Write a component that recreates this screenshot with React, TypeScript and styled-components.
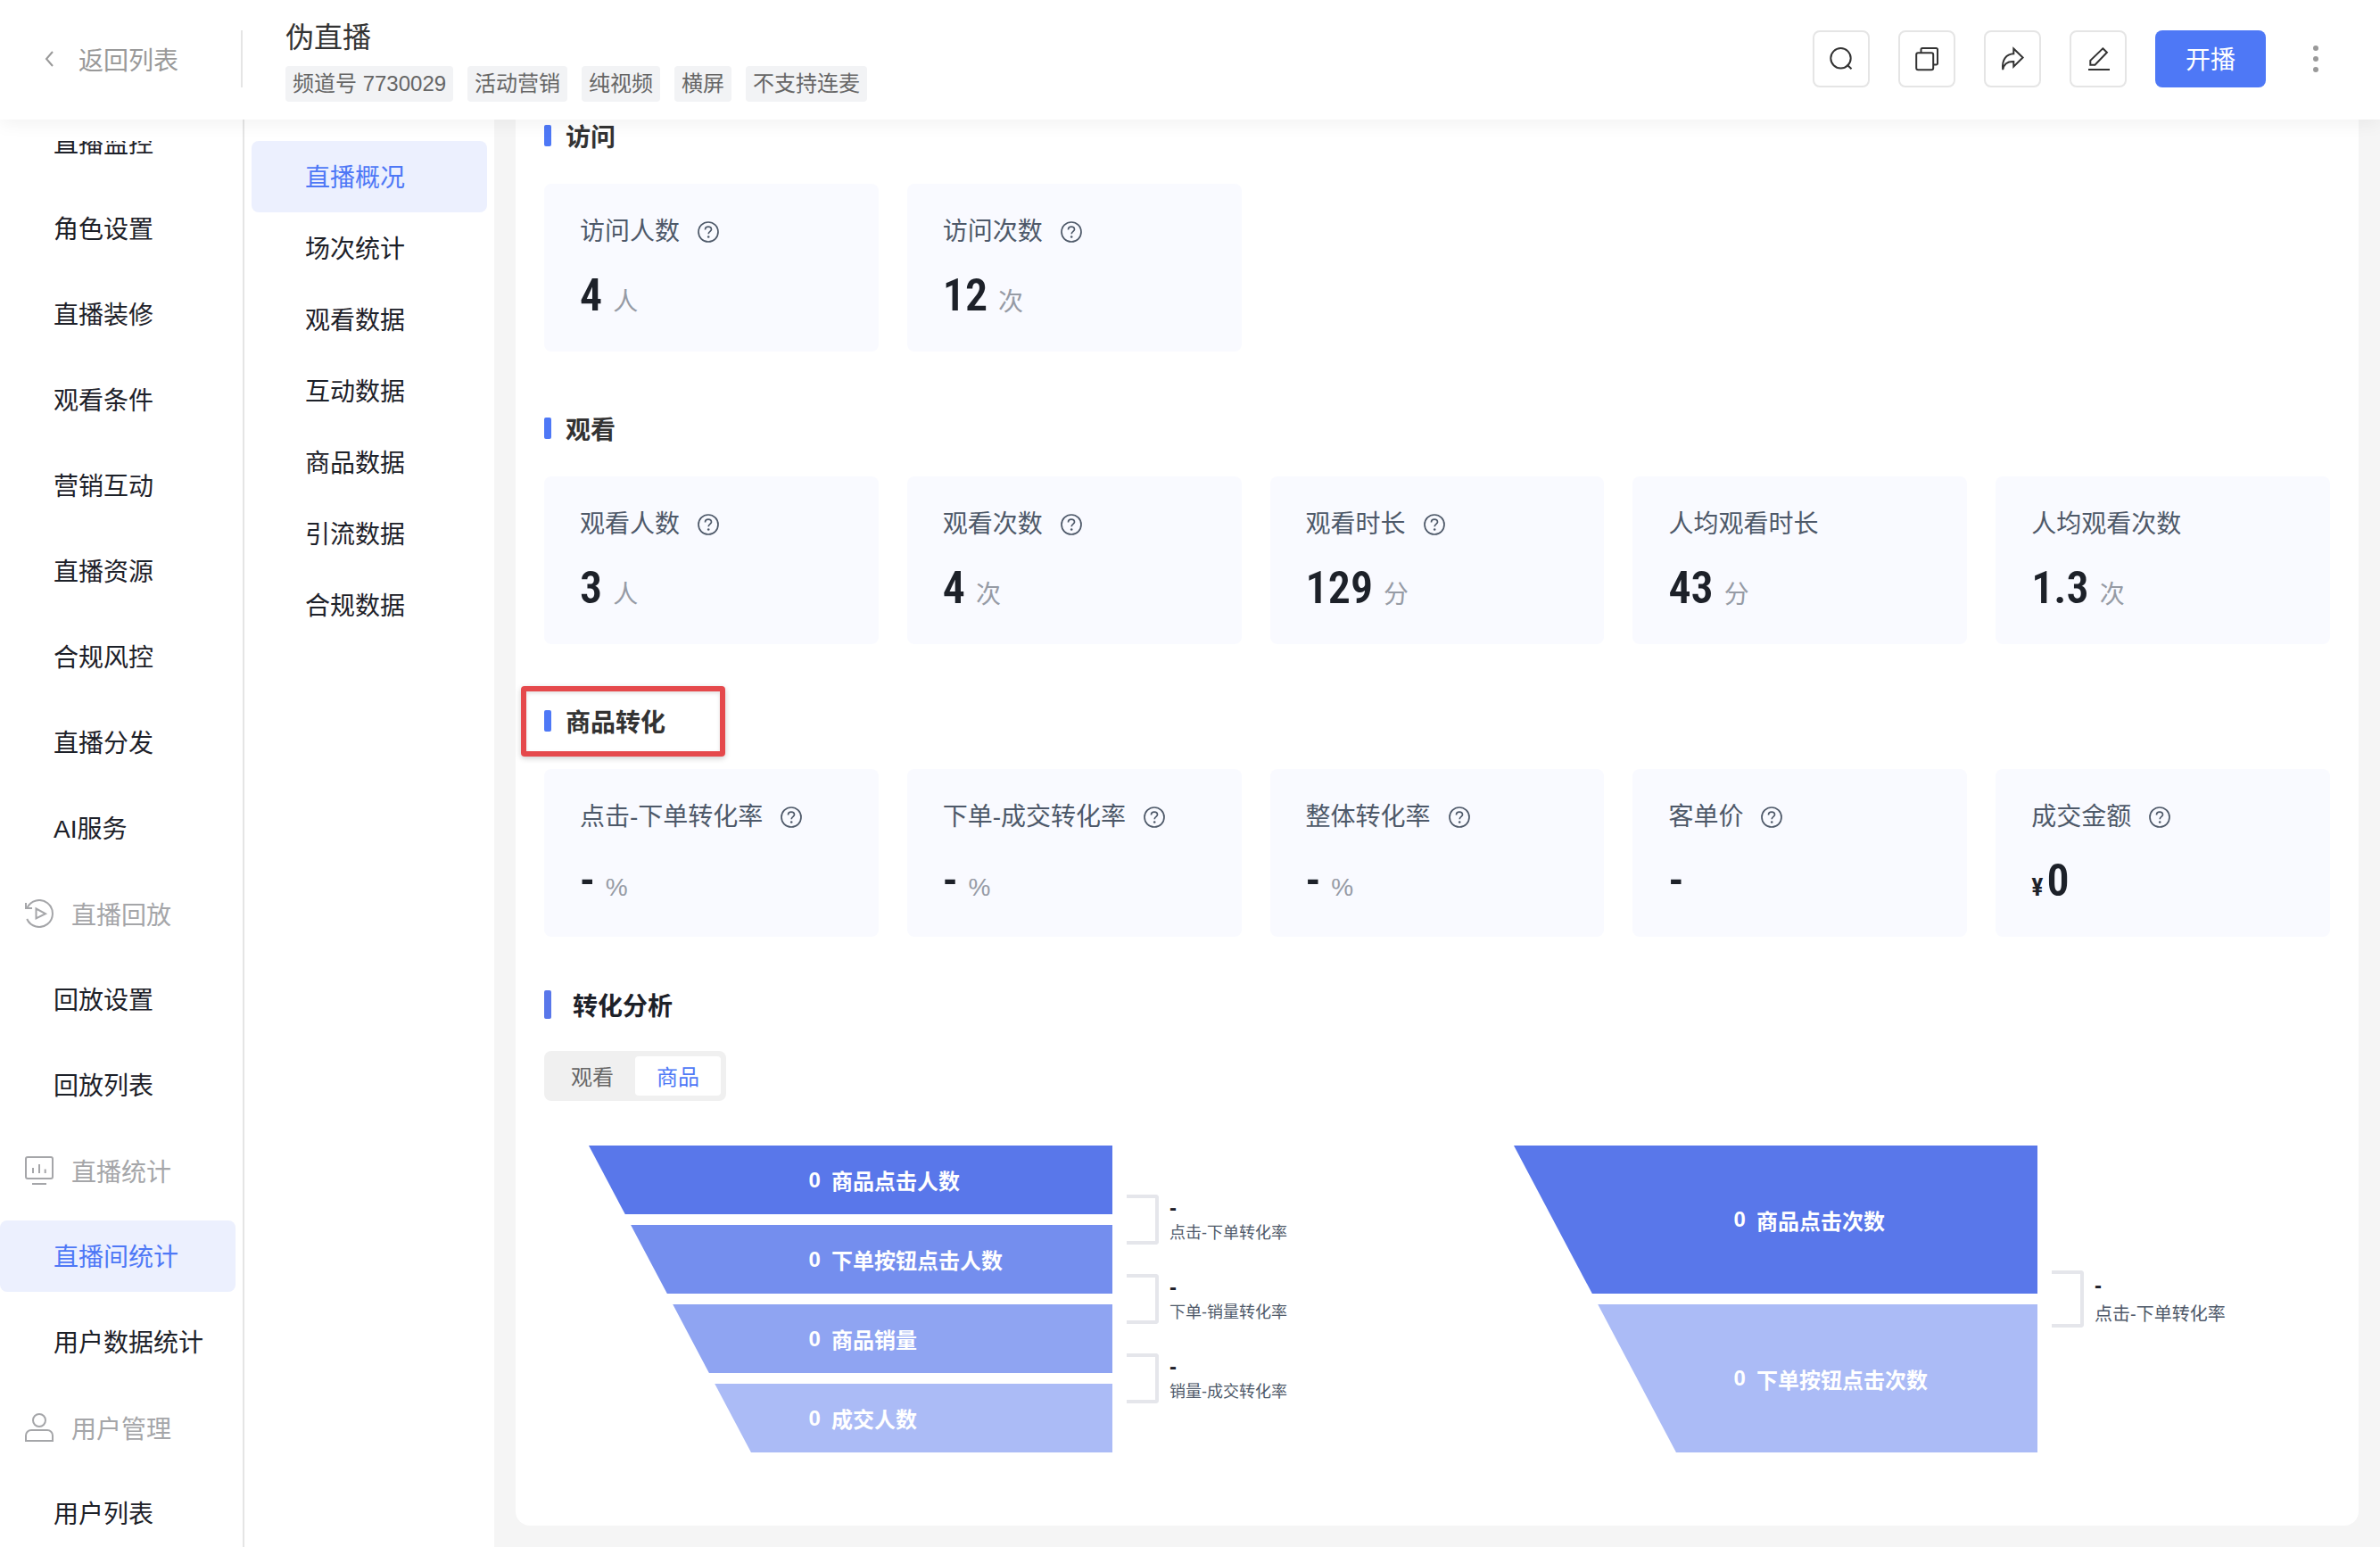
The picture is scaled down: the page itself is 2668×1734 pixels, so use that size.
import React, { useState } from "react";
import styled, { createGlobalStyle } from "styled-components";

const color = {
  primary: "#4e78f6",
  primarySoft: "#ecf0fe",
  ink: "#1d2129",
  title: "#333333",
  label: "#4e5969",
  unit: "#969ba5",
  muted: "#a5a6a9",
  line: "#e5e5e5",
  page: "#f5f5f5",
  card: "#f9faff",
};

const GlobalStyle = createGlobalStyle`
  *, *::before, *::after { box-sizing: border-box; }
  body {
    margin: 0;
    color: ${color.ink};
    background: ${color.page};
    font-family: "Liberation Sans", "Noto Sans CJK SC", sans-serif;
  }
  button { font-family: inherit; cursor: pointer; }
  a { color: inherit; text-decoration: none; }
  h1, h2, ul, dl, dd { margin: 0; padding: 0; }
  ul { list-style: none; }
`;

const Shell = styled.div`
  display: flex;
  flex-direction: column;
  height: 100vh;
  overflow: hidden;
`;

/* ---------- header ---------- */

const Header = styled.header`
  display: flex;
  align-items: center;
  flex: none;
  height: 134px;
  padding: 0 56px 2px 0;
  background: #fff;
  box-shadow: 0 4px 20px rgba(0, 0, 0, 0.06);
  z-index: 2;
`;

const BackLink = styled.a`
  display: flex;
  align-items: center;
  gap: 22px;
  width: 272px;
  height: 64px;
  padding-left: 44px;
  border-right: 2px solid ${color.line};
  color: #999;
  font-size: 28px;
`;

const ChannelInfo = styled.div`
  flex: 1;
  padding-left: 48px;
`;

const ChannelTitle = styled.h1`
  color: ${color.title};
  font-size: 32px;
  font-weight: 400;
  line-height: 48px;
`;

const TagRow = styled.ul`
  display: flex;
  gap: 16px;
  margin-top: 8px;
`;

const Tag = styled.li`
  padding: 0 8px;
  border-radius: 4px;
  background: #f2f3f5;
  color: #666;
  font-size: 24px;
  line-height: 40px;
`;

const Toolbar = styled.div`
  display: flex;
  align-items: center;
  gap: 32px;
`;

const ToolButton = styled.button`
  display: grid;
  place-items: center;
  width: 64px;
  height: 64px;
  padding: 0;
  border: 2px solid ${color.line};
  border-radius: 8px;
  background: #fff;
  color: ${color.title};
`;

const LiveButton = styled.button`
  width: 124px;
  height: 64px;
  padding: 0 0 2px;
  border: 0;
  border-radius: 8px;
  background: ${color.primary};
  color: #fff;
  font-size: 28px;
`;

const MoreButton = styled.button`
  display: grid;
  place-items: center;
  width: 32px;
  height: 64px;
  margin-left: 8px;
  padding: 0;
  border: 0;
  background: none;
  color: #999;
`;

/* ---------- navigation ---------- */

const Body = styled.div`
  display: flex;
  flex: 1;
  min-height: 0;
`;

const SideNav = styled.nav`
  flex: none;
  width: 274px;
  padding: 24px 8px 0 0;
  border-right: 2px solid ${color.line};
  background: #fff;
`;

const SideScroller = styled.div`
  height: 100%;
  overflow: hidden;
`;

/* The list rests in a scrolled position, its first entry partly out of view. */
const SideList = styled.ul`
  display: flex;
  flex-direction: column;
  gap: 16px;
  margin-top: -38px;
`;

const SideLink = styled.a<{ $active?: boolean }>`
  display: flex;
  align-items: center;
  height: 80px;
  padding: 0 0 2px 60px;
  border-radius: 8px;
  background: ${(p) => (p.$active ? color.primarySoft : "transparent")};
  color: ${(p) => (p.$active ? color.primary : color.ink)};
  font-size: 28px;
`;

const SideGroup = styled.div`
  display: flex;
  align-items: center;
  gap: 20px;
  height: 80px;
  padding-left: 28px;
  color: ${color.muted};
  font-size: 28px;
`;

const SubNav = styled.nav`
  flex: none;
  width: 280px;
  padding: 24px 8px;
  background: #fff;
`;

/* ---------- content ---------- */

const Main = styled.main`
  flex: 1;
  min-width: 0;
  padding: 0 24px 24px;
  overflow: hidden;
`;

const Panel = styled.div`
  height: 100%;
  padding: 6px 32px 0;
  border-radius: 0 0 16px 16px;
  background: #fff;
`;

const Section = styled.section`
  margin-bottom: 74px;
`;

const SectionTitle = styled.h2<{ $marked?: boolean }>`
  position: relative;
  display: flex;
  align-items: center;
  gap: 16px;
  width: fit-content;
  height: 24px;
  color: ${color.title};
  font-size: 28px;
  font-weight: 700;
  white-space: nowrap;

  &::before {
    content: "";
    width: 8px;
    height: 24px;
    border-radius: 2px;
    background: ${color.primary};
  }

  ${(p) =>
    p.$marked &&
    `&::after {
      content: "";
      position: absolute;
      inset: -27px -67px -28px -26px;
      border: 6px solid #e5494c;
      border-radius: 4px;
      box-shadow: 0 2px 6px rgba(0, 0, 0, 0.2), inset 0 2px 4px rgba(0, 0, 0, 0.12);
    }`}
`;

const CardGrid = styled.div`
  display: grid;
  grid-template-columns: repeat(5, 1fr);
  gap: 32px;
  margin-top: 42px;
`;

const Card = styled.dl`
  height: 188px;
  padding: 36px 40px;
  border-radius: 8px;
  background: ${color.card};
`;

const CardLabel = styled.dt`
  display: flex;
  align-items: center;
  gap: 20px;
  color: ${color.label};
  font-size: 28px;
  line-height: 36px;
  white-space: nowrap;
`;

const HelpButton = styled.button`
  display: grid;
  width: 24px;
  height: 24px;
  padding: 0;
  border: 0;
  background: none;
  color: ${color.label};
`;

const CardValue = styled.dd`
  display: flex;
  align-items: baseline;
  gap: 12px;
  margin-top: 25px;
  line-height: 56px;
`;

const Figure = styled.span`
  color: ${color.ink};
  font-family: "Roboto Condensed", Roboto, "Liberation Sans", sans-serif;
  font-size: 50px;
  font-weight: 600;
`;

const Currency = styled.span`
  margin-right: 4px;
  font-size: 28px;
`;

const Unit = styled.span`
  color: ${color.unit};
  font-size: 28px;
`;

const AnalysisTitle = styled.h2`
  display: flex;
  align-items: center;
  gap: 24px;
  height: 32px;
  font-size: 28px;
  font-weight: 700;

  &::before {
    content: "";
    width: 8px;
    height: 32px;
    border-radius: 2px;
    background: #5977ea;
  }
`;

const Analysis = styled.section`
  margin-top: -14px;
`;

const Tabs = styled.div`
  display: flex;
  width: fit-content;
  margin-top: 36px;
  padding: 6px;
  border-radius: 8px;
  background: #f0f0f0;
`;

const Tab = styled.button<{ $active: boolean }>`
  width: 96px;
  height: 44px;
  padding: 0 0 2px;
  border: 0;
  border-radius: 4px;
  background: ${(p) => (p.$active ? "#fff" : "transparent")};
  color: ${(p) => (p.$active ? color.primary : "#666")};
  font-size: 24px;
`;

const Funnels = styled.div`
  display: grid;
  grid-template-columns: 1fr 1fr;
  gap: 72px;
  margin-top: 50px;
`;

const FunnelChart = styled.div`
  display: flex;
  gap: 16px;
  height: 344px;
  padding-left: 50px;
`;

const FunnelShape = styled.ol`
  display: flex;
  flex: 1;
  flex-direction: column;
  gap: 12px;
  margin: 0;
  padding: 0;
  list-style: none;
  clip-path: polygon(0 0, 100% 0, 100% 100%, 31% 100%);
`;

const FunnelStep = styled.li<{ $fill: string }>`
  display: flex;
  flex: 1;
  align-items: center;
  gap: 12px;
  padding-left: 42%;
  background: ${(p) => p.$fill};
  color: #fff;
  font-size: 24px;
  font-weight: 700;
  white-space: nowrap;
`;

const Rates = styled.ul`
  display: flex;
  flex-direction: column;
  justify-content: center;
  gap: 33px;
  width: 312px;
`;

const Rate = styled.li<{ $large: boolean }>`
  display: flex;
  align-items: center;
  gap: 12px;
  height: ${(p) => (p.$large ? 64 : 56)}px;
  color: ${color.label};
  font-size: ${(p) => (p.$large ? 20 : 18)}px;
  line-height: ${(p) => (p.$large ? 32 : 28)}px;

  &::before {
    content: "";
    align-self: stretch;
    width: 36px;
    border: 4px solid #e5e6eb;
    border-left: 0;
    border-radius: 0 4px 4px 0;
  }
`;

const RateText = styled.div`
  padding-top: 2px;
`;

const RateValue = styled.strong`
  display: block;
  color: ${color.ink};
  font-size: 24px;
`;

/* ---------- icons ---------- */

type IconProps = { children: React.ReactNode; size?: number; weight?: number };

const Icon = ({ children, size = 32, weight = 2 }: IconProps) => (
  <svg width={size} height={size} viewBox={`0 0 ${size} ${size}`} fill="none" stroke="currentColor" strokeWidth={weight} aria-hidden="true">
    {children}
  </svg>
);

const SearchIcon = () => (
  <Icon>
    <circle cx="15.5" cy="15.3" r="11.2" />
    <path d="M22.5 22.5l5 4.8" />
  </Icon>
);

const CopyIcon = () => (
  <Icon>
    <rect x="4.2" y="9.2" width="19" height="19" rx="2" />
    <path d="M9.5 9V5.5a1.5 1.5 0 0 1 1.5-1.5H26.5a1.5 1.5 0 0 1 1.5 1.5V21a1.5 1.5 0 0 1-1.5 1.5H23.5" />
  </Icon>
);

const ShareIcon = () => (
  <Icon>
    <path d="M17.3 4.5L27.6 14.5 17.3 24.6V19C11.5 18.8 6.5 20.5 5.2 28 3.8 17 9 10.5 17.3 10.2Z" />
  </Icon>
);

const EditIcon = () => (
  <Icon>
    <path d="M21.3 4.3l4.6 4.5L12.5 22.7H7.3V17.8Z" />
    <path d="M5 28H29" />
  </Icon>
);

const ReplayIcon = () => (
  <Icon>
    <path d="M2.3 9.8A15 15 0 1 1 2.2 22" />
    <path d="M1 4V10H8" />
    <path d="M12.5 10.5L23 16.2 12.5 21.5Z" />
  </Icon>
);

const StatsIcon = () => (
  <Icon>
    <rect x="1" y="1" width="30" height="24" rx="2" />
    <path d="M9 13v6M16 9v10M22.7 14.5v4.5M8 31h16" />
  </Icon>
);

const UserIcon = () => (
  <Icon>
    <circle cx="16" cy="8" r="7" />
    <path d="M1 31V25a6 6 0 0 1 6-6H25a6 6 0 0 1 6 6V31Z" />
  </Icon>
);

const HelpIcon = () => (
  <Icon size={24} weight={1.7}>
    <circle cx="12" cy="12" r="11" />
    <path d="M8.5 9.5C8.5 7.5 10 6.2 12 6.2S15.5 7.5 15.5 9.3C15.5 11.3 12.2 11.6 12.2 14.2" />
    <circle cx="12.2" cy="17.5" r="1.3" fill="currentColor" stroke="none" />
  </Icon>
);

/* ---------- data ---------- */

type NavEntry = { text: string; icon?: React.ReactNode; active?: boolean };

const sideEntries: NavEntry[] = [
  { text: "直播监控" },
  { text: "角色设置" },
  { text: "直播装修" },
  { text: "观看条件" },
  { text: "营销互动" },
  { text: "直播资源" },
  { text: "合规风控" },
  { text: "直播分发" },
  { text: "AI服务" },
  { text: "直播回放", icon: <ReplayIcon /> },
  { text: "回放设置" },
  { text: "回放列表" },
  { text: "直播统计", icon: <StatsIcon /> },
  { text: "直播间统计", active: true },
  { text: "用户数据统计" },
  { text: "用户管理", icon: <UserIcon /> },
  { text: "用户列表" },
];

const subEntries = ["直播概况", "场次统计", "观看数据", "互动数据", "商品数据", "引流数据", "合规数据"];

const tags = ["频道号 7730029", "活动营销", "纯视频", "横屏", "不支持连麦"];

type Metric = { label: string; value: string; unit?: string; help?: boolean; currency?: string };

const sections: { title: string; marked?: boolean; metrics: Metric[] }[] = [
  {
    title: "访问",
    metrics: [
      { label: "访问人数", value: "4", unit: "人", help: true },
      { label: "访问次数", value: "12", unit: "次", help: true },
    ],
  },
  {
    title: "观看",
    metrics: [
      { label: "观看人数", value: "3", unit: "人", help: true },
      { label: "观看次数", value: "4", unit: "次", help: true },
      { label: "观看时长", value: "129", unit: "分", help: true },
      { label: "人均观看时长", value: "43", unit: "分" },
      { label: "人均观看次数", value: "1.3", unit: "次" },
    ],
  },
  {
    title: "商品转化",
    marked: true,
    metrics: [
      { label: "点击-下单转化率", value: "-", unit: "%", help: true },
      { label: "下单-成交转化率", value: "-", unit: "%", help: true },
      { label: "整体转化率", value: "-", unit: "%", help: true },
      { label: "客单价", value: "-", help: true },
      { label: "成交金额", value: "0", currency: "¥", help: true },
    ],
  },
];

const funnels = [
  {
    large: false,
    steps: [
      { text: "商品点击人数", fill: "#5977ea" },
      { text: "下单按钮点击人数", fill: "#748eee" },
      { text: "商品销量", fill: "#8fa4f2" },
      { text: "成交人数", fill: "#abbbf6" },
    ],
    rates: ["点击-下单转化率", "下单-销量转化率", "销量-成交转化率"],
  },
  {
    large: true,
    steps: [
      { text: "商品点击次数", fill: "#5977ea" },
      { text: "下单按钮点击次数", fill: "#abbbf6" },
    ],
    rates: ["点击-下单转化率"],
  },
];

/* ---------- page ---------- */

const MetricCard = ({ label, value, unit, help, currency }: Metric) => (
  <Card>
    <CardLabel>
      {label}
      {help && (
        <HelpButton type="button" aria-label={`${label}说明`}>
          <HelpIcon />
        </HelpButton>
      )}
    </CardLabel>
    <CardValue>
      <Figure>
        {currency && <Currency>{currency}</Currency>}
        {value}
      </Figure>
      {unit && <Unit>{unit}</Unit>}
    </CardValue>
  </Card>
);

export default function App() {
  const [tab, setTab] = useState("商品");

  return (
    <Shell>
      <GlobalStyle />
      <Header>
        <BackLink href="#list">
          <svg width="22" height="22" viewBox="0 0 22 22" fill="none" stroke="currentColor" strokeWidth="2" aria-hidden="true">
            <path d="M15 3L8 11l7 8" />
          </svg>
          返回列表
        </BackLink>
        <ChannelInfo>
          <ChannelTitle>伪直播</ChannelTitle>
          <TagRow>
            {tags.map((t) => (
              <Tag key={t}>{t}</Tag>
            ))}
          </TagRow>
        </ChannelInfo>
        <Toolbar>
          <ToolButton type="button" aria-label="搜索"><SearchIcon /></ToolButton>
          <ToolButton type="button" aria-label="复制"><CopyIcon /></ToolButton>
          <ToolButton type="button" aria-label="分享"><ShareIcon /></ToolButton>
          <ToolButton type="button" aria-label="编辑"><EditIcon /></ToolButton>
          <LiveButton type="button">开播</LiveButton>
          <MoreButton type="button" aria-label="更多">
            <svg width="6" height="30" viewBox="0 0 6 30" fill="currentColor" aria-hidden="true">
              <circle cx="3" cy="3" r="3" />
              <circle cx="3" cy="15" r="3" />
              <circle cx="3" cy="27" r="3" />
            </svg>
          </MoreButton>
        </Toolbar>
      </Header>

      <Body>
        <SideNav>
          <SideScroller>
            <SideList>
              {sideEntries.map((e) => (
                <li key={e.text}>
                  {e.icon ? (
                    <SideGroup>
                      {e.icon}
                      {e.text}
                    </SideGroup>
                  ) : (
                    <SideLink href="#" $active={e.active}>
                      {e.text}
                    </SideLink>
                  )}
                </li>
              ))}
            </SideList>
          </SideScroller>
        </SideNav>

        <SubNav>
          <ul>
            {subEntries.map((text, i) => (
              <li key={text}>
                <SideLink href="#" $active={i === 0}>
                  {text}
                </SideLink>
              </li>
            ))}
          </ul>
        </SubNav>

        <Main>
          <Panel>
            {sections.map((s) => (
              <Section key={s.title}>
                <SectionTitle $marked={s.marked}>{s.title}</SectionTitle>
                <CardGrid>
                  {s.metrics.map((m) => (
                    <MetricCard key={m.label} {...m} />
                  ))}
                </CardGrid>
              </Section>
            ))}

            <Analysis>
              <AnalysisTitle>转化分析</AnalysisTitle>
              <Tabs role="tablist">
                {["观看", "商品"].map((t) => (
                  <Tab key={t} type="button" role="tab" aria-selected={t === tab} $active={t === tab} onClick={() => setTab(t)}>
                    {t}
                  </Tab>
                ))}
              </Tabs>
              <Funnels>
                {funnels.map((f) => (
                  <FunnelChart key={f.steps[0].text}>
                    <FunnelShape>
                      {f.steps.map((s) => (
                        <FunnelStep key={s.text} $fill={s.fill}>
                          <span>0</span>
                          <span>{s.text}</span>
                        </FunnelStep>
                      ))}
                    </FunnelShape>
                    <Rates>
                      {f.rates.map((r) => (
                        <Rate key={r} $large={f.large}>
                          <RateText>
                            <RateValue>-</RateValue>
                            {r}
                          </RateText>
                        </Rate>
                      ))}
                    </Rates>
                  </FunnelChart>
                ))}
              </Funnels>
            </Analysis>
          </Panel>
        </Main>
      </Body>
    </Shell>
  );
}
